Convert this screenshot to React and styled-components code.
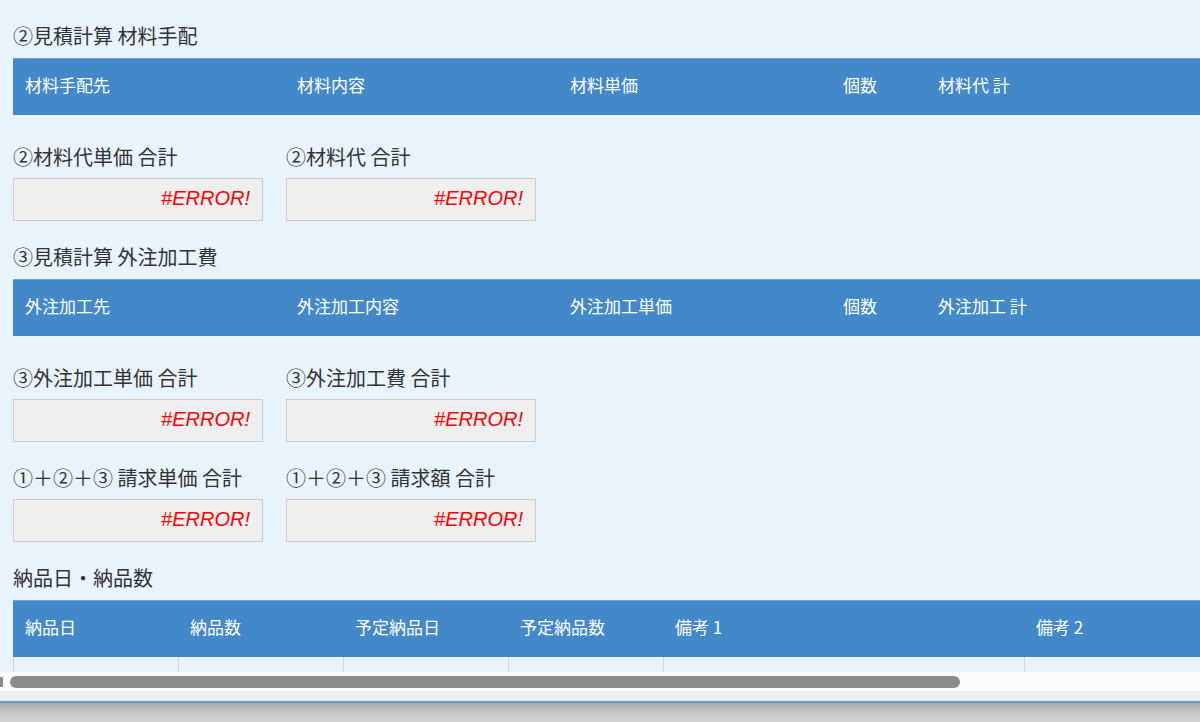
import styled, { createGlobalStyle } from 'styled-components';

const GlobalStyle = createGlobalStyle`
  html, body {
    margin: 0;
    padding: 0;
    background: #d0d0d0;
  }
  body {
    font-family: "Noto Sans CJK JP", "Noto Sans", sans-serif;
    color: #333;
  }
`;

const Window = styled.div`
  width: 1200px;
  height: 722px;
  display: flex;
  flex-direction: column;
  overflow: hidden;
`;

const ScrollArea = styled.div`
  height: 672px;
  background: #e9f3fc;
  overflow: hidden;
`;

const Content = styled.div`
  width: 1500px;
  padding: 22px 0 0 13px;
  box-sizing: border-box;
`;

const SectionTitle = styled.h2`
  margin: 0 0 8px;
  font-size: 20px;
  font-weight: 400;
  line-height: 28px;
  color: #333;
`;

const HeaderBar = styled.div`
  display: flex;
  height: 57px;
  background: #4389c9;
  border-top: 1px solid #6fa5d6;
  box-sizing: border-box;
  margin-bottom: ${(p) => (p.$flush ? '0' : '28px')};
`;

const HeaderCell = styled.div`
  flex: ${(p) => (p.$w ? `0 0 ${p.$w}px` : '1 1 auto')};
  display: flex;
  align-items: center;
  padding: 0 0 6px 12px;
  box-sizing: border-box;
  color: #fff;
  font-size: 17px;
  white-space: nowrap;
`;

const BodyRow = styled.div`
  display: flex;
  height: 40px;
`;

const BodyCell = styled.div`
  flex: ${(p) => (p.$w ? `0 0 ${p.$w}px` : '1 1 auto')};
  border-left: 1px solid #d2d6da;
  box-sizing: border-box;
`;

const FieldRow = styled.div`
  display: flex;
  gap: 23px;
  margin-bottom: 22px;
`;

const Field = styled.div`
  width: 250px;
`;

const FieldLabel = styled.div`
  font-size: 20px;
  line-height: 28px;
  margin-bottom: 7px;
  white-space: nowrap;
  color: #333;
`;

const ValueBox = styled.div`
  height: 43px;
  background: #efefef;
  border: 1px solid #cdcdcd;
  box-sizing: border-box;
  display: flex;
  align-items: center;
  justify-content: flex-end;
  padding: 0 12px 2px 0;
  color: #ff0000;
  font-family: "Liberation Sans", Arial, sans-serif;
  font-style: italic;
  font-size: 20px;
`;

const ScrollTrack = styled.div`
  height: 19px;
  background: #fcfcfc;
  display: flex;
  align-items: center;
  gap: 7px;
`;

const ArrowStub = styled.div`
  width: 3px;
  height: 10px;
  background: #8c8c8c;
`;

const Thumb = styled.div`
  width: 950px;
  height: 12px;
  border-radius: 6px;
  background: #8c8c8c;
`;

const StatusStrip = styled.div`
  height: 9px;
  background: #f0f0f0;
  border-bottom: 1px solid #e2e2e2;
`;

const AccentLine = styled.div`
  height: 2px;
  background: #6a9fcf;
`;

const Desk = styled.div`
  flex: 1;
  background: linear-gradient(#a9a9a9, #cdcdcd 60%, #d2d2d2);
`;

const materialCols = [
  { label: '材料手配先', w: 272 },
  { label: '材料内容', w: 273 },
  { label: '材料単価', w: 273 },
  { label: '個数', w: 95 },
  { label: '材料代 計' },
];

const outsourceCols = [
  { label: '外注加工先', w: 272 },
  { label: '外注加工内容', w: 273 },
  { label: '外注加工単価', w: 273 },
  { label: '個数', w: 95 },
  { label: '外注加工 計' },
];

const deliveryCols = [
  { label: '納品日', w: 165 },
  { label: '納品数', w: 165 },
  { label: '予定納品日', w: 165 },
  { label: '予定納品数', w: 155 },
  { label: '備考 1', w: 361 },
  { label: '備考 2' },
];

const Header = ({ cols, flush }) => (
  <HeaderBar $flush={flush}>
    {cols.map((c) => (
      <HeaderCell key={c.label} $w={c.w}>
        {c.label}
      </HeaderCell>
    ))}
  </HeaderBar>
);

const Totals = ({ items }) => (
  <FieldRow>
    {items.map((label) => (
      <Field key={label}>
        <FieldLabel>{label}</FieldLabel>
        <ValueBox>#ERROR!</ValueBox>
      </Field>
    ))}
  </FieldRow>
);

export default function App() {
  return (
    <>
      <GlobalStyle />
      <Window>
        <ScrollArea>
          <Content>
            <SectionTitle>②見積計算 材料手配</SectionTitle>
            <Header cols={materialCols} />
            <Totals items={['②材料代単価 合計', '②材料代 合計']} />

            <SectionTitle>③見積計算 外注加工費</SectionTitle>
            <Header cols={outsourceCols} />
            <Totals items={['③外注加工単価 合計', '③外注加工費 合計']} />
            <Totals items={['①＋②＋③ 請求単価 合計', '①＋②＋③ 請求額 合計']} />

            <SectionTitle>納品日・納品数</SectionTitle>
            <Header cols={deliveryCols} flush />
            <BodyRow>
              {deliveryCols.map((c) => (
                <BodyCell key={c.label} $w={c.w} />
              ))}
            </BodyRow>
          </Content>
        </ScrollArea>
        <ScrollTrack>
          <ArrowStub />
          <Thumb />
        </ScrollTrack>
        <StatusStrip />
        <AccentLine />
        <Desk />
      </Window>
    </>
  );
}
